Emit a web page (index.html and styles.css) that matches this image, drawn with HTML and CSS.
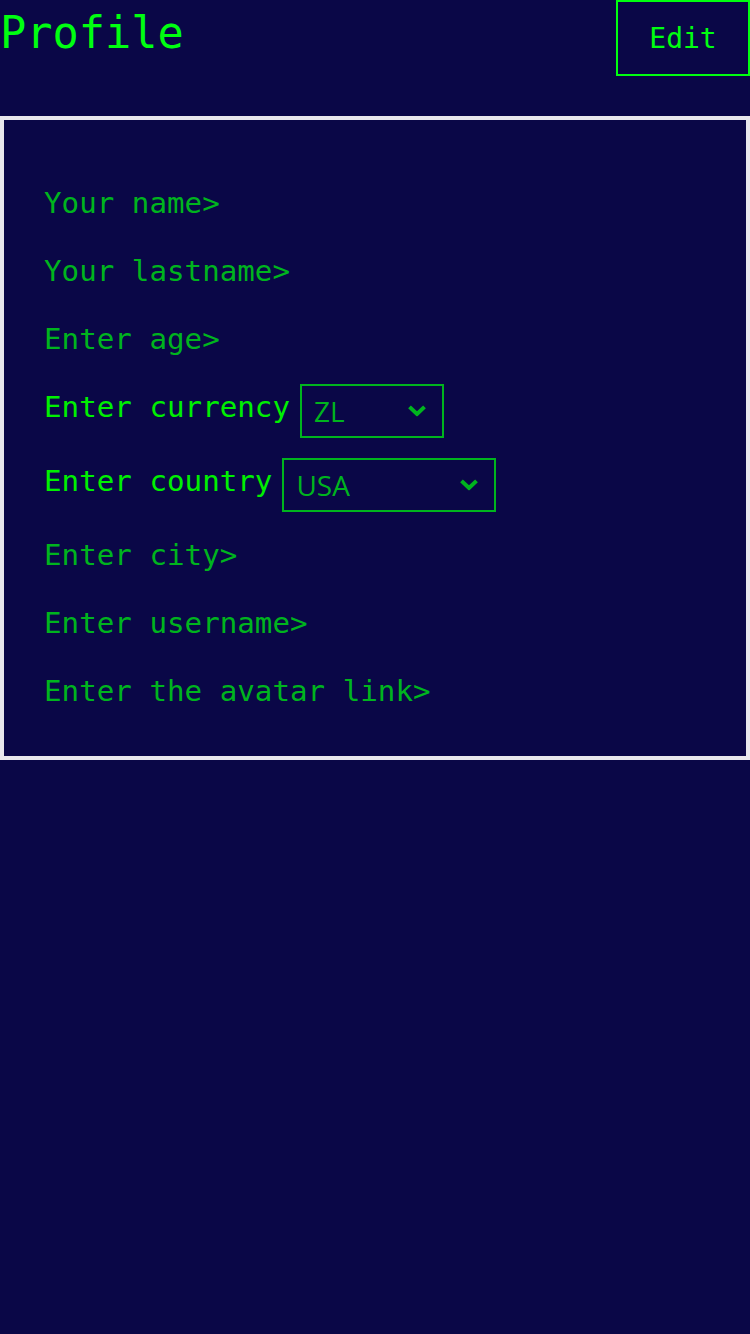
FILE: index.html
```html
<!DOCTYPE html>
<html lang="en">
<head>
<meta charset="utf-8">
<title>Profile</title>
<link rel="stylesheet" href="styles.css">
</head>
<body>
<header class="header">
  <h1 class="title">Profile</h1>
  <button class="edit-btn" type="button">Edit</button>
</header>
<form class="card">
  <div class="field">Your name&gt;</div>
  <div class="field field--gap30">Your lastname&gt;</div>
  <div class="field field--gap30">Enter age&gt;</div>
  <div class="choice choice--first">
    <label class="choice__label" for="currency">Enter currency</label>
    <span class="select-wrap">
      <select class="select select--currency" id="currency">
        <option>ZL</option>
        <option>USD</option>
        <option>EUR</option>
      </select>
      <svg class="chevron" width="20" height="12" viewBox="0 0 20 12" aria-hidden="true"><polyline points="2.5,2.5 10,9.5 17.5,2.5" fill="none" stroke="currentColor" stroke-width="4" stroke-linecap="butt" stroke-linejoin="miter"/></svg>
    </span>
  </div>
  <div class="choice choice--second">
    <label class="choice__label" for="country">Enter country</label>
    <span class="select-wrap">
      <select class="select select--country" id="country">
        <option>USA</option>
        <option>Poland</option>
      </select>
      <svg class="chevron" width="20" height="12" viewBox="0 0 20 12" aria-hidden="true"><polyline points="2.5,2.5 10,9.5 17.5,2.5" fill="none" stroke="currentColor" stroke-width="4" stroke-linecap="butt" stroke-linejoin="miter"/></svg>
    </span>
  </div>
  <div class="field field--gap24">Enter city&gt;</div>
  <div class="field field--gap30">Enter username&gt;</div>
  <div class="field field--gap30">Enter the avatar link&gt;</div>
</form>
</body>
</html>
```

FILE: styles.css
```css
html, body {
  margin: 0;
  padding: 0;
  background: #0a0747;
  min-height: 100%;
}

body {
  font-family: "DejaVu Sans Mono", "Liberation Mono", monospace;
  color: #00b41e;
}

.header {
  display: flex;
  justify-content: space-between;
  align-items: flex-start;
  height: 116px;
}

.title {
  margin: 0;
  padding-top: 8px;
  font-size: 43.6px;
  line-height: 50px;
  font-weight: normal;
  color: #00ff10;
}

.edit-btn {
  box-sizing: border-box;
  width: 134px;
  height: 76px;
  padding: 0;
  margin: 0;
  background: transparent;
  border: 2px solid #00ff10;
  color: #00ff10;
  font-family: "DejaVu Sans Mono", "Liberation Mono", monospace;
  font-size: 28px;
  display: flex;
  align-items: center;
  justify-content: center;
}

.card {
  margin: 0;
  border: 4px solid #e9e8ed;
  padding: 64px 38px 46px 40px;
  display: flex;
  flex-direction: column;
  align-items: flex-start;
}

.field {
  font-size: 29.2px;
  line-height: 38px;
  color: #00b41e;
}

.field--gap30 { margin-top: 30px; }
.field--gap24 { margin-top: 24px; }

.choice {
  display: flex;
  align-items: flex-start;
  gap: 10px;
}

.choice--first { margin-top: 26px; }
.choice--second { margin-top: 20px; }

.choice__label {
  padding-top: 4px;
  font-size: 29.2px;
  line-height: 38px;
  color: #00f000;
}

.select-wrap {
  position: relative;
  display: block;
  color: #00b41e;
}

.select {
  appearance: none;
  -webkit-appearance: none;
  box-sizing: border-box;
  display: block;
  height: 54px;
  margin: 0;
  padding: 0 12px;
  background: transparent;
  border: 2px solid #00b41e;
  border-radius: 0;
  color: #00b41e;
  font-family: "Open Sans", "Noto Sans", sans-serif;
  font-size: 28px;
  font-weight: 500;
  outline: none;
}

.select--currency { width: 144px; }
.select--country { width: 214px; }

.select option {
  background: #0a0747;
  color: #00b41e;
}

.chevron {
  position: absolute;
  right: 17px;
  top: 50%;
  transform: translateY(-55%);
  pointer-events: none;
}
```
